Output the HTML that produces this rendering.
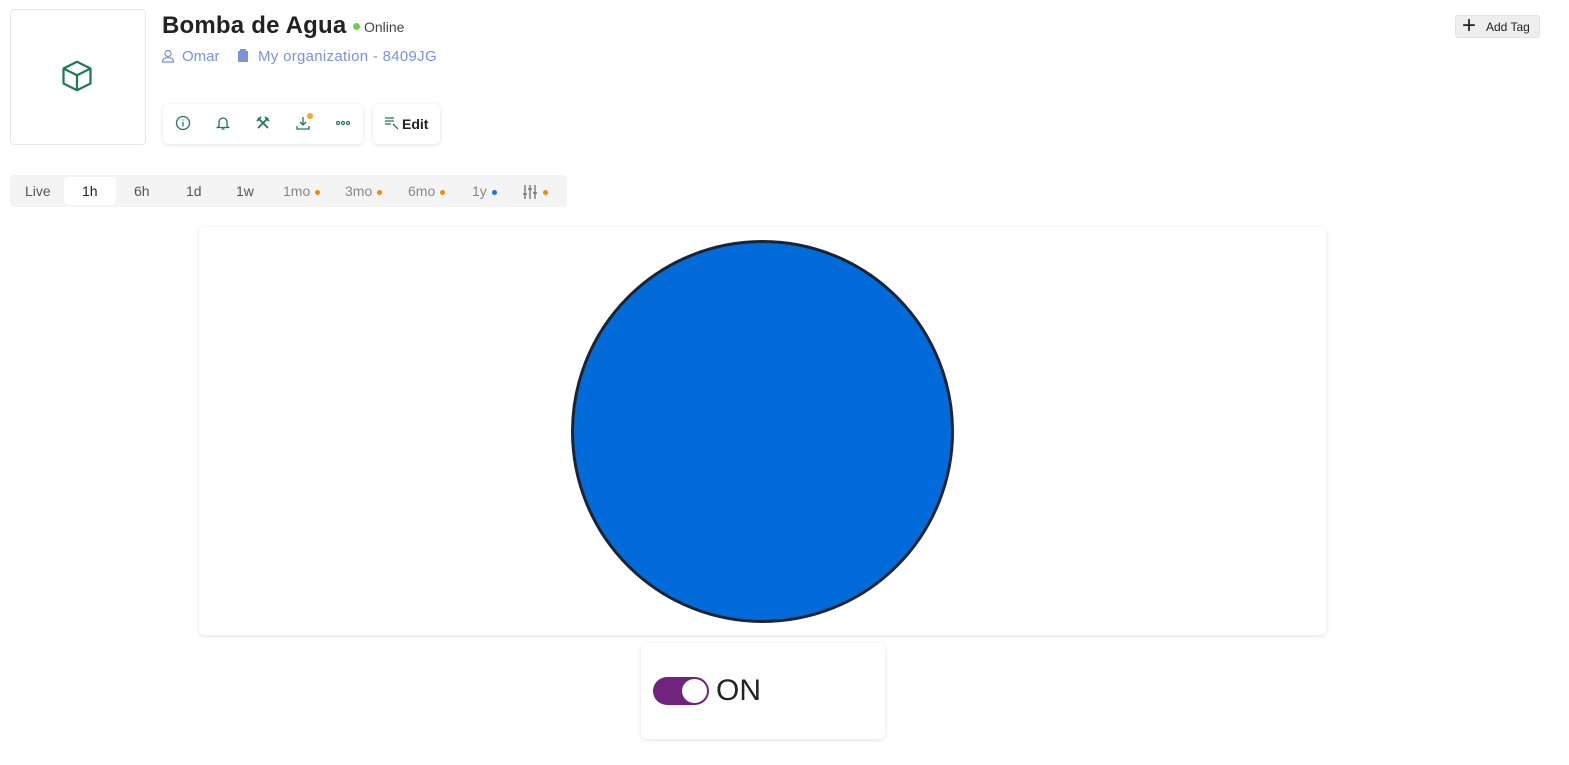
<!DOCTYPE html>
<html><head><style>
*{box-sizing:border-box;margin:0;padding:0}
body{width:1569px;height:765px;background:#fff;font-family:"Liberation Sans",sans-serif;position:relative;overflow:hidden}
.abs{position:absolute}
.card{box-shadow:0 1px 4px rgba(0,0,0,.12);border-radius:5px;background:#fff}
.tab{position:absolute;top:183px;font-size:14px;color:#555}
.dot{display:inline-block;width:5px;height:5px;border-radius:50%;background:#f58a07;margin-left:5px;vertical-align:middle}
svg.i{position:absolute}
</style></head><body>
<div class="abs" style="left:10px;top:9px;width:136px;height:136px;border:1px solid #e8e8e8;border-radius:4px"></div>
<svg class="i" style="left:59px;top:58px" width="36" height="36" viewBox="0 0 24 24" fill="none" stroke="#1e7a5a" stroke-width="1.5" stroke-linejoin="round"><path d="M12 2.5l9 4.5v10l-9 4.5-9-4.5V7z"/><path d="M3 7l9 4.5 9-4.5M12 11.5v10"/></svg>
<div class="abs" style="left:162px;top:12px;font-size:24px;font-weight:bold;color:#222;letter-spacing:0.2px">Bomba de Agua</div>
<div class="abs" style="left:353px;top:23px;width:7px;height:7px;border-radius:50%;background:#6fcf50"></div>
<div class="abs" style="left:364px;top:19px;font-size:14px;color:#444">Online</div>
<svg class="i" style="left:161px;top:49px" width="14" height="14" viewBox="0 0 14 14" fill="none" stroke="#7b93dd" stroke-width="1.2"><circle cx="7" cy="4.5" r="3"/><path d="M1.5 13c0-3 2.5-4.5 5.5-4.5s5.5 1.5 5.5 4.5z"/></svg>
<div class="abs" style="left:182px;top:48px;font-size:15px;color:#7b93dd">Omar</div>
<svg class="i" style="left:237px;top:49px" width="12" height="14" viewBox="0 0 12 14" fill="#7b93dd"><rect x="1" y="2" width="10" height="11"/><rect x="3" y="0" width="6" height="2"/></svg>
<div class="abs" style="left:258px;top:48px;font-size:15px;color:#7b93dd;letter-spacing:0.3px">My organization - 8409JG</div>
<div class="abs card" style="left:163px;top:104px;width:200px;height:40px"></div>
<svg class="i" style="left:175px;top:115px" width="16" height="16" viewBox="0 0 16 16" fill="none" stroke="#1e7a5a" stroke-width="1.3"><circle cx="8" cy="8" r="6.5"/><path d="M8 7v4.5M8 4.5v1"/></svg>
<svg class="i" style="left:215px;top:115px" width="16" height="16" viewBox="0 0 16 16" fill="none" stroke="#1e7a5a" stroke-width="1.3"><path d="M4 11V7a4 4 0 018 0v4l1.5 1.5h-11zM6.5 14h3"/></svg>
<svg class="i" style="left:255px;top:115px" width="16" height="16" viewBox="0 0 16 16" fill="none" stroke="#1e7a5a" stroke-width="1.8"><path d="M3 3l10 10M13 3L3 13M2 6l4-4M10 2l4 4"/></svg>
<svg class="i" style="left:295px;top:115px" width="16" height="16" viewBox="0 0 16 16" fill="none" stroke="#1e7a5a" stroke-width="1.3"><path d="M8 2v8M5 7l3 3 3-3M2 11v3h12v-3"/></svg>
<div class="abs" style="left:307px;top:113px;width:6px;height:6px;border-radius:50%;background:#f5a623"></div>
<svg class="i" style="left:335px;top:115px" width="16" height="16" viewBox="0 0 16 16" fill="none" stroke="#1e7a5a" stroke-width="1.2"><circle cx="3" cy="8" r="1.5"/><circle cx="8" cy="8" r="1.5"/><circle cx="13" cy="8" r="1.5"/></svg>
<div class="abs card" style="left:373px;top:104px;width:67px;height:40px"></div>
<svg class="i" style="left:384px;top:116px" width="15" height="14" viewBox="0 0 15 14" fill="none" stroke="#1e7a5a" stroke-width="1.3"><path d="M1 2h9M1 5h9M1 8h6M9 8l5 5"/></svg>
<div class="abs" style="left:402px;top:116px;font-size:14px;font-weight:bold;color:#222">Edit</div>
<div class="abs" style="left:1455px;top:15px;width:85px;height:23px;background:#eee;border:1px solid #e2e2e2;border-radius:3px"></div>
<div class="abs" style="left:1462px;top:13px;font-size:24px;color:#222;line-height:26px">+</div>
<div class="abs" style="left:1486px;top:20px;font-size:12px;color:#222">Add Tag</div>
<div class="abs" style="left:10px;top:175px;width:557px;height:32px;background:#f4f4f4;border-radius:4px"></div>
<div class="abs" style="left:64px;top:177px;width:52px;height:28px;background:#fff;border-radius:4px"></div>
<div class="tab" style="left:25px">Live</div>
<div class="tab" style="left:82px;color:#222">1h</div>
<div class="tab" style="left:134px">6h</div>
<div class="tab" style="left:186px">1d</div>
<div class="tab" style="left:236px">1w</div>
<div class="tab" style="left:283px;color:#888">1mo<span class="dot"></span></div>
<div class="tab" style="left:345px;color:#888">3mo<span class="dot"></span></div>
<div class="tab" style="left:408px;color:#888">6mo<span class="dot"></span></div>
<div class="tab" style="left:472px;color:#888">1y<span class="dot" style="background:#1a73e8"></span></div>
<svg class="i" style="left:522px;top:184px" width="16" height="16" viewBox="0 0 16 16" fill="none" stroke="#777" stroke-width="1.4"><path d="M3 1v14M8 1v14M13 1v14M1 10h4M6 5h4M11 9h4"/></svg>
<div class="abs" style="left:543px;top:190px;width:5px;height:5px;border-radius:50%;background:#f58a07"></div>
<div class="abs card" style="left:199px;top:227px;width:1127px;height:408px"></div>
<div class="abs" style="left:571px;top:240px;width:383px;height:383px;border-radius:50%;background:#006bd9;border:3px solid #1c2433"></div>
<div class="abs card" style="left:641px;top:643px;width:244px;height:96px"></div>
<div class="abs" style="left:653px;top:677px;width:56px;height:28px;border-radius:14px;background:#70247d"></div>
<div class="abs" style="left:682px;top:679px;width:25px;height:24px;border-radius:50%;background:#fff"></div>
<div class="abs" style="left:716px;top:674px;font-size:30px;color:#222">ON</div>
</body></html>
